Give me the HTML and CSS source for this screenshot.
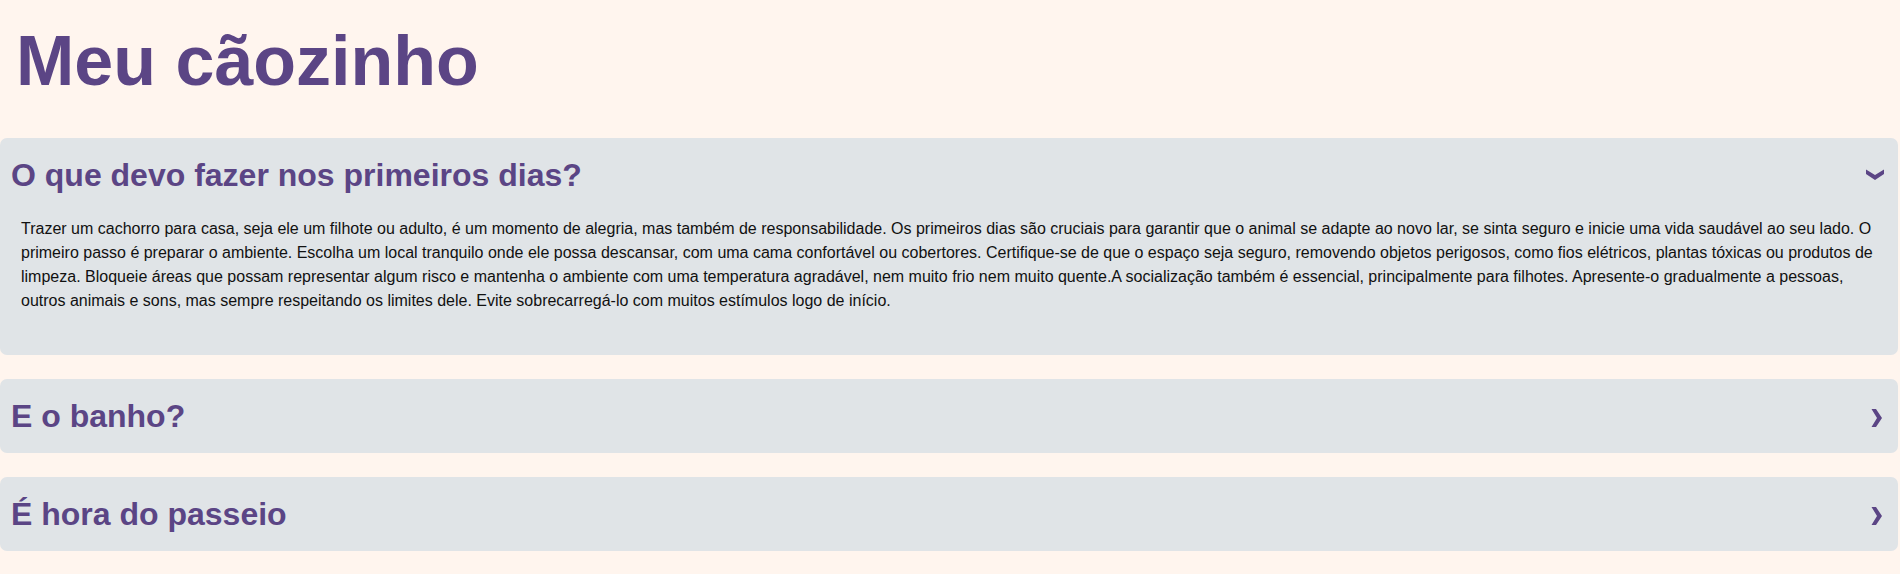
FILE: index.html
```html
<!DOCTYPE html>
<html lang="pt-BR">
<head>
<meta charset="utf-8">
<title>Meu cãozinho</title>
<link rel="stylesheet" href="styles.css">
</head>
<body>
<h1 class="title">Meu cãozinho</h1>
<div class="faq">
  <details class="card" open>
    <summary class="card-head">
      <h2 class="card-title">O que devo fazer nos primeiros dias?</h2>
      <svg class="chev chev-down" width="18" height="11" viewBox="0 0 18 11"><polygon points="0,0.5 9,6 18,0.5 18,5 9,11 0,5" fill="#5b4585"/></svg>
    </summary>
    <div class="card-body">
      <p>Trazer um cachorro para casa, seja ele um filhote ou adulto, é um momento de alegria, mas também de responsabilidade. Os primeiros dias são cruciais para garantir que o animal se adapte ao novo lar, se sinta seguro e inicie uma vida saudável ao seu lado. O primeiro passo é preparar o ambiente. Escolha um local tranquilo onde ele possa descansar, com uma cama confortável ou cobertores. Certifique-se de que o espaço seja seguro, removendo objetos perigosos, como fios elétricos, plantas tóxicas ou produtos de limpeza. Bloqueie áreas que possam representar algum risco e mantenha o ambiente com uma temperatura agradável, nem muito frio nem muito quente.A socialização também é essencial, principalmente para filhotes. Apresente-o gradualmente a pessoas, outros animais e sons, mas sempre respeitando os limites dele. Evite sobrecarregá-lo com muitos estímulos logo de início.</p>
    </div>
  </details>
  <details class="card">
    <summary class="card-head">
      <h2 class="card-title">E o banho?</h2>
      <svg class="chev" width="11" height="18" viewBox="0 0 11 18"><polygon points="0.5,0 5,0 11,9 5,18 0.5,18 6,9" fill="#5b4585"/></svg>
    </summary>
    <div class="card-body"><p>O banho deve ser dado com produtos próprios para cães.</p></div>
  </details>
  <details class="card">
    <summary class="card-head">
      <h2 class="card-title">É hora do passeio</h2>
      <svg class="chev" width="11" height="18" viewBox="0 0 11 18"><polygon points="0.5,0 5,0 11,9 5,18 0.5,18 6,9" fill="#5b4585"/></svg>
    </summary>
    <div class="card-body"><p>Passeios diários são importantes para a saúde do seu cão.</p></div>
  </details>
</div>
</body>
</html>
```
FILE: styles.css
```css
html, body {
  margin: 0;
  padding: 0;
  background: #fff5ee;
}
body {
  font-family: "Liberation Sans", Arial, sans-serif;
  color: #111;
}
.title {
  margin: 20px 0 0 0;
  padding: 0 0 0 16px;
  font-size: 70px;
  font-weight: bold;
  color: #5b4585;
  line-height: 82px;
}
.faq {
  display: flex;
  flex-direction: column;
  gap: 24px;
  margin-top: 36px;
  margin-right: 2px;
}
.card {
  background: #e0e4e7;
  border-radius: 7px;
}
.card-head {
  list-style: none;
  display: flex;
  align-items: center;
  justify-content: space-between;
  padding: 18px 16px 18px 11px;
  cursor: pointer;
}
.card-head::-webkit-details-marker {
  display: none;
}
.card-title {
  margin: 0;
  font-size: 32px;
  line-height: 38px;
  font-weight: bold;
  color: #5b4585;
}
.chev {
  display: block;
  margin-top: 4px;
}
.chev-down {
  margin-right: -2px;
  margin-top: -2px;
}
.card-body {
  padding: 5px 8px 42px 21px;
}
.card-body p {
  margin: 0;
  font-size: 16px;
  line-height: 24px;
}
```
